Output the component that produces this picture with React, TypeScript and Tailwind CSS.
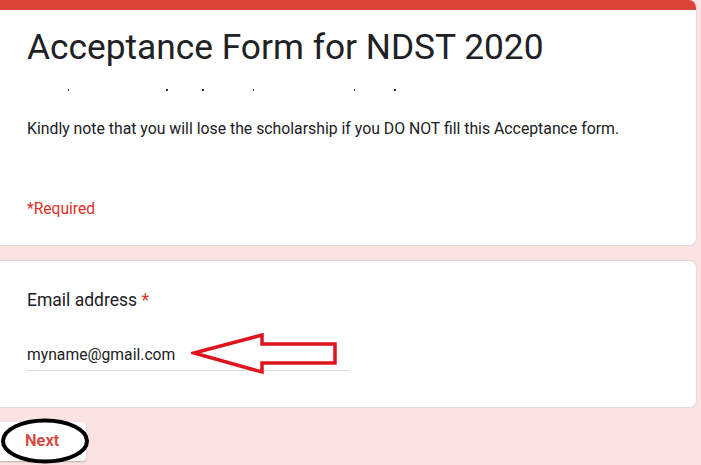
import React from "react";

export default function App() {
  return (
    <div
      className="w-[701px] h-[465px] overflow-hidden bg-[#fae3e2] flex flex-col"
      style={{ fontFamily: "Roboto, 'Liberation Sans', sans-serif" }}
    >
      {/* Header card */}
      <div className="ml-[-8px] w-[705px] h-[246px] shrink-0 rounded-lg bg-white border border-[#dadce0] border-t-0 overflow-hidden flex flex-col">
        <div className="h-[10px] bg-[#db4437] shrink-0" />
        <div className="pl-[34px] pr-6 flex flex-col">
          <div className="mt-[16px] text-[35.3px] leading-[42px] text-[#202124]">
            Acceptance Form for NDST 2020
          </div>
          <div className="relative h-[4px] mt-[21px]">
            <span className="absolute left-[41px] top-0 w-[1px] h-[2px] bg-[#333]" />
            <span className="absolute left-[139px] top-0 w-[2px] h-[2px] bg-[#333]" />
            <span className="absolute left-[175px] top-0 w-[2px] h-[2px] bg-[#333]" />
            <span className="absolute left-[226px] top-0 w-[1px] h-[2px] bg-[#333]" />
            <span className="absolute left-[327px] top-0 w-[1px] h-[2px] bg-[#333]" />
            <span className="absolute left-[367px] top-0 w-[2px] h-[2px] bg-[#333]" />
          </div>
          <div className="mt-[24px] text-[15.8px] leading-6 text-[#202124]">
            Kindly note that you will lose the scholarship if you DO NOT fill this Acceptance form.
          </div>
          <div className="mt-[56px] text-[15.6px] leading-6 text-[#d93025]">*Required</div>
        </div>
      </div>

      {/* Email card */}
      <div className="ml-[-8px] mt-[14px] w-[705px] h-[148px] shrink-0 rounded-lg bg-white border border-[#dadce0] pl-[34px] pt-[27px] flex flex-col">
        <div className="text-[17.5px] leading-6 text-[#202124]">
          Email address <span className="text-[#d93025]">*</span>
        </div>
        <div className="relative mt-[31px] w-[322px] border-b border-[#dadce0] pb-[3px] text-[15.7px] leading-6 text-[#202124]">
          myname@gmail.com
          <svg
            className="absolute left-[164px] top-[-11px]"
            width="150"
            height="45"
            viewBox="0 0 150 45"
          >
            <polygon
              points="3,21 71,3 71,12 144,12 144,31 71,31 71,40"
              fill="none"
              stroke="#e0141e"
              strokeWidth="3.5"
              strokeLinejoin="miter"
            />
          </svg>
        </div>
      </div>

      {/* Next button */}
      <div className="relative mt-[14px] h-[40px]">
        <div className="ml-[-8px] w-[94px] h-[39px] rounded bg-white shadow-[0_1px_2px_rgba(0,0,0,0.25)] flex items-center pl-[33px]">
          <span className="text-[16.4px] font-semibold text-[#d8463b]">Next</span>
        </div>
        <svg className="absolute left-0 top-[-5px]" width="92" height="48" viewBox="0 0 92 48">
          <ellipse cx="45" cy="24" rx="42" ry="20.5" fill="none" stroke="#000" strokeWidth="4" />
        </svg>
      </div>
    </div>
  );
}
